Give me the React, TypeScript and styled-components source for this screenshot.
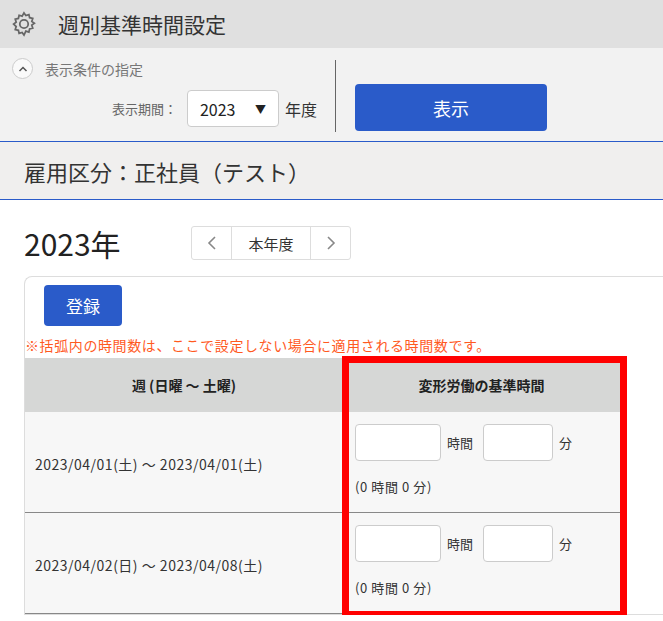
import styled, { createGlobalStyle } from "styled-components";

const Global = createGlobalStyle`
  body { margin: 0; font-family: "Noto Sans CJK JP", "Noto Sans", sans-serif; color: #333; background: #fff; overflow: hidden; }
`;
const Header = styled.div`
  height: 48px; background: #e0e0e0; display: flex; align-items: center; padding-left: 10px; gap: 20px;
  font-size: 21px; color: #333;
`;
const Filter = styled.div`
  height: 93px; background: #f2f2f2; border-bottom: 1px solid #2a5bc9; display: flex;
`;
const FilterLeft = styled.div`
  width: 335px; display: flex; flex-direction: column; padding: 10px 0 0 12px; box-sizing: border-box;
`;
const Toggle = styled.div`
  display: flex; align-items: center; gap: 12px; font-size: 14px; color: #777;
`;
const Circle = styled.div`
  width: 19px; height: 19px; border-radius: 50%; border: 1px solid #ccc; background: #fafafa;
  display: flex; align-items: center; justify-content: center; color: #555;
`;
const Period = styled.div`
  display: flex; align-items: center; justify-content: flex-end; gap: 6px; margin-top: 11px; padding-right: 18px;
  font-size: 16px; color: #333;
`;
const Label = styled.span`
  font-size: 13px; color: #666; margin-right: 4px;
`;
const Select = styled.div`
  width: 92px; height: 37px; box-sizing: border-box; border: 1px solid #ccc; border-radius: 4px; background: #fff;
  display: flex; align-items: center; justify-content: space-between; padding: 0 12px; font-size: 16px; color: #222;
`;
const Divider = styled.div`
  width: 1px; background: #666; margin: 12px 0 9px;
`;
const ShowButton = styled.div`
  margin: 36px 0 0 19px; width: 192px; height: 47px; border-radius: 4px; background: #2a5bc9; color: #fff;
  display: flex; align-items: center; justify-content: center; font-size: 18px;
`;
const Section = styled.div`
  height: 57px; background: #f0efee; border-bottom: 1px solid #2a5bc9; display: flex; align-items: center;
  padding-left: 24px; font-size: 22px; color: #333;
`;
const YearRow = styled.div`
  display: flex; align-items: center; padding: 24px 0 0 24px; height: 38px;
`;
const Year = styled.div`
  font-size: 30px; color: #222; width: 167px;
`;
const NavGroup = styled.div`
  display: flex; height: 32px; border: 1px solid #ddd; border-radius: 3px;
`;
const NavBtn = styled.div<{ $wide?: boolean }>`
  width: ${(p) => (p.$wide ? "78px" : "39px")}; display: flex; align-items: center; justify-content: center;
  font-size: 15px; color: #333;
  border-left: ${(p) => (p.$wide ? "1px solid #ddd" : "none")}; border-right: ${(p) => (p.$wide ? "1px solid #ddd" : "none")};
`;
const Card = styled.div`
  margin: 14px 0 0 24px; border: 1px solid #ddd; border-right: none; border-radius: 8px 0 0 0; padding: 8px 0 0 0;
`;
const Register = styled.div`
  margin-left: 19px; width: 78px; height: 41px; border-radius: 4px; background: #2a5bc9; color: #fff;
  display: flex; align-items: center; justify-content: center; font-size: 17px;
`;
const Notice = styled.div`
  color: #ff5a1f; font-size: 14px; letter-spacing: 0.6px; margin: 9px 0 3px 0; white-space: nowrap;
`;
const TableWrap = styled.div`
  position: relative; width: 595px;
`;
const Table = styled.div`
  display: grid; grid-template-columns: 318px 277px;
`;
const Th = styled.div`
  height: 54px; background: #d6d7d6; display: flex; align-items: center; justify-content: center;
  font-weight: bold; font-size: 14px; color: #222;
`;
const Td = styled.div`
  height: 101px; background: #f7f7f7; border-bottom: 1px solid #888; box-sizing: border-box; font-size: 14px; color: #333;
`;
const DateCell = styled(Td)`
  display: flex; align-items: center; padding-left: 10px; padding-top: 4px; letter-spacing: 0.5px;
`;
const TimeCell = styled(Td)`
  padding: 12px 0 0 12px; font-size: 13px;
`;
const Inputs = styled.div`
  display: flex; align-items: center; gap: 6px;
`;
const Input = styled.div<{ $w: number }>`
  width: ${(p) => p.$w}px; height: 37px; box-sizing: border-box; background: #fff; border: 1px solid #ccc; border-radius: 4px;
`;
const Unit = styled.span`
  margin-right: 4px;
`;
const Default = styled.div`
  margin-top: 16px; letter-spacing: 0.6px;
`;
const Highlight = styled.div`
  position: absolute; left: 317px; top: -2px; width: 285px; height: 262px; box-sizing: border-box; border: 7px solid #ff0000;
`;

const rows = ["2023/04/01(土) ～ 2023/04/01(土)", "2023/04/02(日) ～ 2023/04/08(土)"];

const Gear = () => (
  <svg width="28" height="28" viewBox="0 0 24 24" fill="none" stroke="#666" strokeWidth="1.5">
    <path d="M12 2.5l1.6 2.2 2.6-.8.6 2.7 2.7.6-.8 2.6 2.2 1.6-2.2 1.6.8 2.6-2.7.6-.6 2.7-2.6-.8L12 21.5l-1.6-2.2-2.6.8-.6-2.7-2.7-.6.8-2.6L3.1 12l2.2-1.6-.8-2.6 2.7-.6.6-2.7 2.6.8z" />
    <circle cx="12" cy="12" r="3.6" />
  </svg>
);

const Chevron = ({ dir }: { dir: "l" | "r" }) => (
  <svg width="10" height="16" viewBox="0 0 10 16" fill="none" stroke="#888" strokeWidth="1.6">
    <path d={dir === "l" ? "M8 2L2 8l6 6" : "M2 2l6 6-6 6"} />
  </svg>
);

export default function App() {
  return (
    <>
      <Global />
      <Header>
        <Gear />
        <span>週別基準時間設定</span>
      </Header>
      <Filter>
        <FilterLeft>
          <Toggle>
            <Circle>
              <svg width="10" height="8" viewBox="0 0 10 8" fill="none" stroke="#555" strokeWidth="1.5">
                <path d="M1.5 6L5 2.5 8.5 6" />
              </svg>
            </Circle>
            表示条件の指定
          </Toggle>
          <Period>
            <Label>表示期間：</Label>
            <Select>2023<span style={{ fontSize: 11 }}>▼</span></Select>
            年度
          </Period>
        </FilterLeft>
        <Divider />
        <ShowButton>表示</ShowButton>
      </Filter>
      <Section>雇用区分：正社員（テスト）</Section>
      <YearRow>
        <Year>2023年</Year>
        <NavGroup>
          <NavBtn><Chevron dir="l" /></NavBtn>
          <NavBtn $wide>本年度</NavBtn>
          <NavBtn><Chevron dir="r" /></NavBtn>
        </NavGroup>
      </YearRow>
      <Card>
        <Register>登録</Register>
        <Notice>※括弧内の時間数は、ここで設定しない場合に適用される時間数です。</Notice>
        <TableWrap>
          <Table>
            <Th>週 (日曜 ～ 土曜)</Th>
            <Th>変形労働の基準時間</Th>
            {rows.map((r) => (
              <>
                <DateCell key={r}>{r}</DateCell>
                <TimeCell key={r + "t"}>
                  <Inputs>
                    <Input $w={86} />
                    <Unit>時間</Unit>
                    <Input $w={70} />
                    <span>分</span>
                  </Inputs>
                  <Default>(0 時間 0 分)</Default>
                </TimeCell>
              </>
            ))}
          </Table>
          <Highlight />
        </TableWrap>
      </Card>
    </>
  );
}
